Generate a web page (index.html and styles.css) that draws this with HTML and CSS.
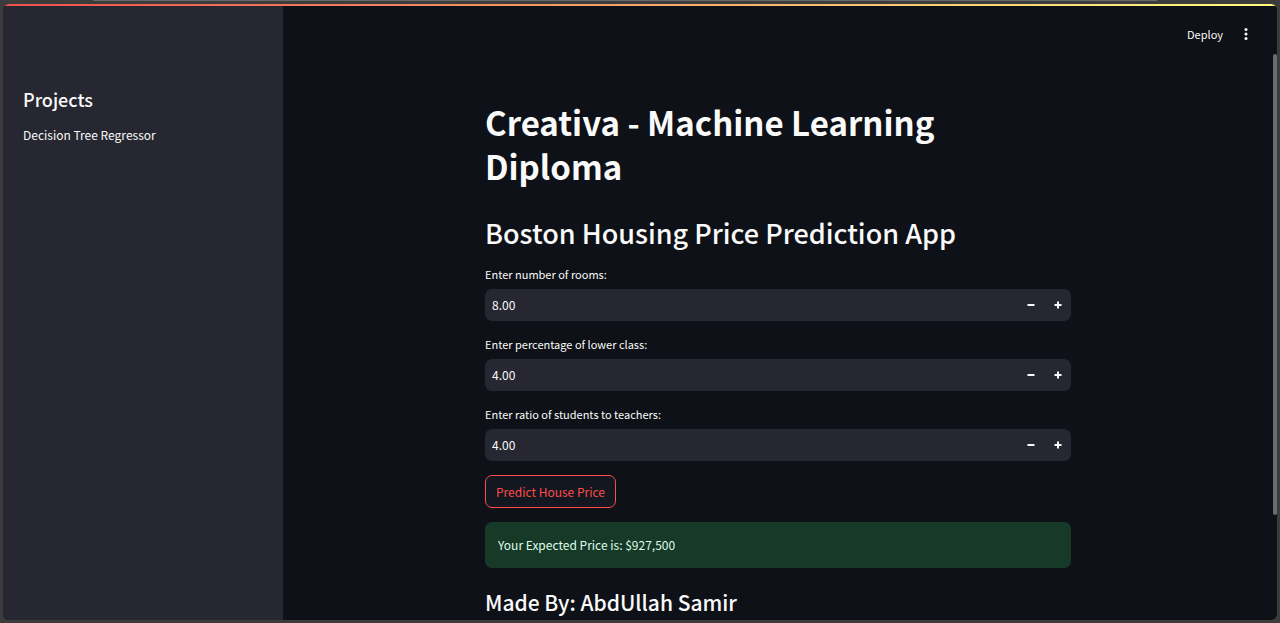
FILE: index.html
```html
<!DOCTYPE html>
<html lang="en">
<head>
<meta charset="utf-8">
<meta name="viewport" content="width=device-width, initial-scale=1">
<title>Creativa - Machine Learning Diploma</title>
<link rel="stylesheet" href="styles.css">
</head>
<body>
<div class="tab-edge"></div>
<div class="app">
  <div class="decoration"></div>
  <div class="view">
    <aside class="sidebar">
      <h2 class="sidebar-title">Projects</h2>
      <p class="sidebar-text">Decision Tree Regressor</p>
    </aside>
    <main class="main">
      <header class="toolbar">
        <button type="button" class="deploy">Deploy</button>
        <button type="button" class="menu" aria-label="Main menu">
          <svg viewBox="0 0 16 16" width="16" height="16" fill="currentColor" aria-hidden="true"><circle cx="8" cy="3.6" r="1.5"/><circle cx="8" cy="8" r="1.5"/><circle cx="8" cy="12.4" r="1.5"/></svg>
        </button>
      </header>
      <div class="content">
        <h1 class="title">Creativa - Machine Learning Diploma</h1>
        <h2 class="heading">Boston Housing Price Prediction App</h2>
        <div class="field">
          <label class="label" for="rooms">Enter number of rooms:</label>
          <div class="number">
            <input class="input" id="rooms" type="text" inputmode="decimal" value="8.00">
            <button type="button" class="step" aria-label="Decrease rooms"><svg viewBox="0 0 8 8" width="8" height="8" aria-hidden="true"><path d="M.5 4h7"/></svg></button>
            <button type="button" class="step" aria-label="Increase rooms"><svg viewBox="0 0 8 8" width="8" height="8" aria-hidden="true"><path d="M.5 4h7M4 .5v7"/></svg></button>
          </div>
        </div>
        <div class="field">
          <label class="label" for="lower">Enter percentage of lower class:</label>
          <div class="number">
            <input class="input" id="lower" type="text" inputmode="decimal" value="4.00">
            <button type="button" class="step" aria-label="Decrease percentage"><svg viewBox="0 0 8 8" width="8" height="8" aria-hidden="true"><path d="M.5 4h7"/></svg></button>
            <button type="button" class="step" aria-label="Increase percentage"><svg viewBox="0 0 8 8" width="8" height="8" aria-hidden="true"><path d="M.5 4h7M4 .5v7"/></svg></button>
          </div>
        </div>
        <div class="field">
          <label class="label" for="ratio">Enter ratio of students to teachers:</label>
          <div class="number">
            <input class="input" id="ratio" type="text" inputmode="decimal" value="4.00">
            <button type="button" class="step" aria-label="Decrease ratio"><svg viewBox="0 0 8 8" width="8" height="8" aria-hidden="true"><path d="M.5 4h7"/></svg></button>
            <button type="button" class="step" aria-label="Increase ratio"><svg viewBox="0 0 8 8" width="8" height="8" aria-hidden="true"><path d="M.5 4h7M4 .5v7"/></svg></button>
          </div>
        </div>
        <button type="button" class="predict">Predict House Price</button>
        <div class="alert" role="status">Your Expected Price is: $927,500</div>
        <h3 class="author">Made By: AbdUllah Samir</h3>
      </div>
      <div class="scroll-thumb"></div>
    </main>
  </div>
</div>
</body>
</html>
```
FILE: styles.css
```css
* { box-sizing: border-box; }

body {
  margin: 0;
  height: 100vh;
  display: flex;
  flex-direction: column;
  padding: 0 3px 3px;
  background: #3c3c3c;
  color: #fafafa;
  font-family: "Noto Sans CJK SC", "Noto Sans", sans-serif;
  font-size: 12px;
  line-height: 20px;
}

h1, h2, h3, p { margin: 0; }

button, input {
  font: inherit;
  color: inherit;
  background: none;
  border: 0;
  padding: 0;
  margin: 0;
}

.tab-edge {
  height: 1px;
  margin: 0 120px 3px 90px;
  background: #686a6a;
}

.app {
  flex: 1;
  min-height: 0;
  display: flex;
  flex-direction: column;
  border-radius: 6px;
  overflow: hidden;
  background: #0e1117;
}

.decoration {
  flex: none;
  height: 2px;
  background: linear-gradient(90deg, #f0504f, #fffd80);
}

.view {
  flex: 1;
  min-height: 0;
  display: flex;
}

.sidebar {
  flex: none;
  width: 280px;
  padding: 79px 20px;
  background: #262730;
}

.sidebar-title {
  font-size: 18px;
  font-weight: 500;
  line-height: 28px;
  margin-bottom: 12px;
}

.main {
  flex: 1;
  min-width: 0;
  position: relative;
  overflow: hidden;
  padding-right: 4px;
}

.toolbar {
  display: flex;
  justify-content: flex-end;
  align-items: center;
  gap: 15px;
  height: 56px;
  padding-right: 19px;
}

.deploy { font-size: 11px; }

.menu { display: flex; }

.content {
  display: flex;
  flex-direction: column;
  align-items: stretch;
  gap: 14px;
  max-width: 586px;
  margin: 0 auto;
  padding-top: 38px;
}

.title {
  font-size: 33px;
  font-weight: 700;
  line-height: 44px;
}

.heading {
  font-size: 27px;
  font-weight: 500;
  line-height: 36px;
  padding-top: 13px;
}

.field { display: flex; flex-direction: column; }

.label {
  font-size: 11px;
  line-height: 18px;
  padding-bottom: 6px;
}

.number {
  display: flex;
  height: 32px;
  border-radius: 7px;
  background: #262730;
  overflow: hidden;
}

.input { flex: 1; min-width: 0; padding-left: 7px; }

.step {
  width: 27px;
  display: grid;
  place-items: center;
}

.step path { stroke: #fafafa; stroke-width: 2; fill: none; }

.predict {
  align-self: flex-start;
  height: 33px;
  padding: 0 10px;
  border: 1px solid #ff4b4b;
  border-radius: 7px;
  background: #131720;
  color: #ff4b4b;
}

.alert {
  padding: 13px;
  border-radius: 7px;
  background: #173928;
  color: #dffde9;
}

.author {
  font-size: 21px;
  font-weight: 500;
  line-height: 28px;
  padding-top: 6px;
}

.scroll-thumb {
  position: absolute;
  top: 48px;
  right: 0;
  width: 4px;
  height: 75%;
  border-radius: 2px;
  background: #6b6c70;
}
```
